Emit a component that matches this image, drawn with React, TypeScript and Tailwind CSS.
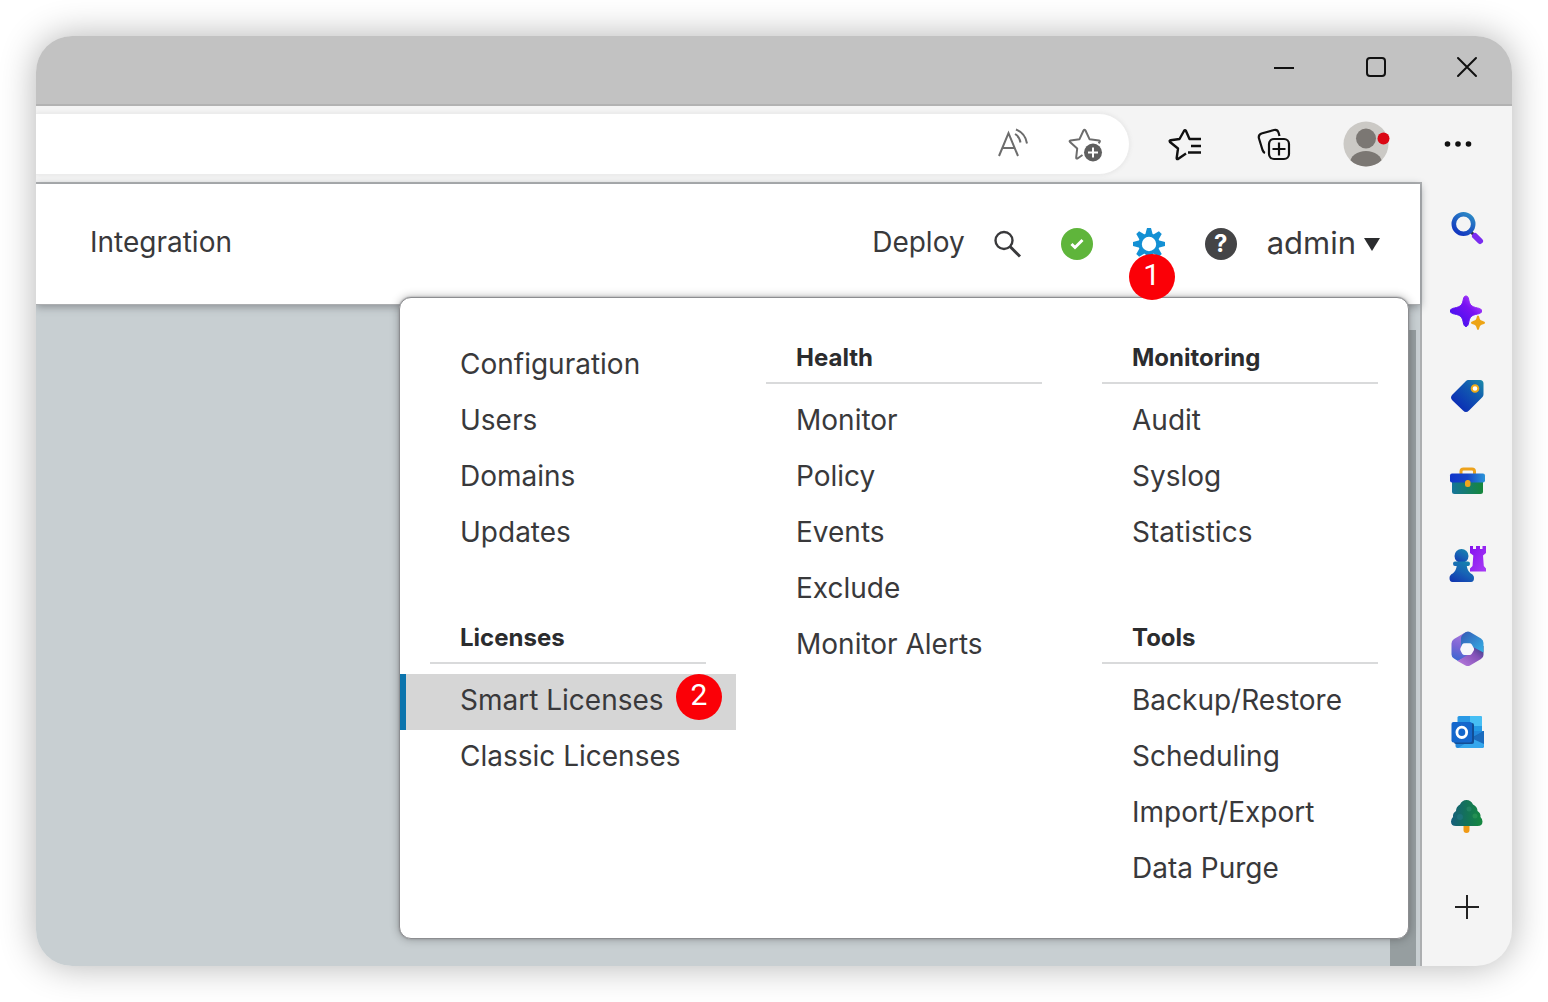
import React from 'react';

type Section = { title?: string; items: string[] };

const columns: Section[][] = [
  [
    { items: ['Configuration', 'Users', 'Domains', 'Updates'] },
    { title: 'Licenses', items: ['Smart Licenses', 'Classic Licenses'] },
  ],
  [{ title: 'Health', items: ['Monitor', 'Policy', 'Events', 'Exclude', 'Monitor Alerts'] }],
  [
    { title: 'Monitoring', items: ['Audit', 'Syslog', 'Statistics'] },
    { title: 'Tools', items: ['Backup/Restore', 'Scheduling', 'Import/Export', 'Data Purge'] },
  ],
];

function Badge({ n }: { n: number }) {
  return (
    <span className="flex size-[46px] items-center justify-center rounded-full bg-[#fb0007] pb-1 font-[Roboto,sans-serif] text-[30px] leading-none font-normal text-white">
      {n}
    </span>
  );
}

function MenuSection({ title, items }: Section) {
  return (
    <section>
      {title && (
        <h2 className="mx-[30px] mb-2.5 h-[46px] border-b-2 border-[#d9dadb] px-[30px] text-[24px] leading-[40px] font-bold text-[#2b2c2e]">
          {title}
        </h2>
      )}
      <ul>
        {items.map((item) => {
          const active = item === 'Smart Licenses';
          return (
            <li key={item} className="relative">
              <a
                href="#"
                className={
                  active
                    ? 'block h-14 border-l-[6px] border-[#0b74ad] bg-[#d6d6d6] pl-[54px] leading-[52px] whitespace-nowrap'
                    : 'block h-14 pl-[60px] leading-[52px] whitespace-nowrap'
                }
              >
                {item}
              </a>
              {active && (
                <span className="absolute top-0 right-3.5">
                  <Badge n={2} />
                </span>
              )}
            </li>
          );
        })}
      </ul>
    </section>
  );
}

const sideIcons: { label: string; art: React.ReactNode }[] = [
  {
    label: 'Search',
    art: (
      <>
        <defs>
          <linearGradient id="ring" x1="0.8" y1="0" x2="0.2" y2="1">
            <stop offset="0" stopColor="#2b86c5" />
            <stop offset="1" stopColor="#1236c0" />
          </linearGradient>
          <linearGradient id="handle" x1="0" y1="0" x2="1" y2="1">
            <stop offset="0" stopColor="#5a1fd0" />
            <stop offset="1" stopColor="#9a3cff" />
          </linearGradient>
        </defs>
        <path d="M22 22l6 6" stroke="#2f3350" strokeWidth="3" />
        <circle cx="14.500" cy="14" r="9.700" fill="none" stroke="url(#ring)" strokeWidth="4.600" />
        <path d="M26 26l5 5" stroke="#7a2cf0" strokeWidth="6" strokeLinecap="round" />
      </>
    ),
  },
  {
    label: 'Discover',
    art: (
      <>
        <defs>
          <linearGradient id="spark" x1="0" y1="1" x2="1" y2="0">
            <stop offset="0.200" stopColor="#4a10f0" />
            <stop offset="0.600" stopColor="#7a12f2" />
            <stop offset="1" stopColor="#c65cff" />
          </linearGradient>
        </defs>
        <path d="M17 2c1.500 0 2.200 1 2.600 3 1.200 6 2.200 7.500 9 9 2.500.500 4 1 4 3s-1.500 2.500-4 3c-6.800 1.400-7.800 3-9 9-.4 2-1.100 3.500-2.600 3.500s-2.200-1.500-2.600-3.500c-1.200-6-2.200-7.600-9-9-2.500-.5-4-1-4-3s1.500-2.500 4-3c6.800-1.500 7.800-3 9-9C14.800 3 15.500 2 17 2z" fill="url(#spark)" stroke="url(#spark)" strokeWidth="1" />
        <path d="M29 21.500c.8 0 1 .8 1.300 1.800.7 2.700 1.200 3.100 3.900 3.900 1 .3 1.800.6 1.800 1.500s-.8 1.200-1.800 1.500c-2.700.8-3.200 1.300-3.900 3.900-.3 1-.5 1.900-1.300 1.900s-1-.9-1.300-1.900c-.7-2.600-1.200-3.100-3.900-3.900-1-.3-1.800-.6-1.800-1.500s.8-1.200 1.800-1.500c2.700-.8 3.200-1.200 3.900-3.900.3-1 .5-1.800 1.300-1.800z" fill="#eda414" />
      </>
    ),
  },
  {
    label: 'Shopping',
    art: (
      <>
        <defs>
          <linearGradient id="tag" x1="1" y1="0" x2="0.200" y2="0.800">
            <stop offset="0" stopColor="#1c8ba8" />
            <stop offset="0.450" stopColor="#1159b0" />
            <stop offset="1" stopColor="#0b2fb5" />
          </linearGradient>
        </defs>
        <path d="M20 2h11c2.200 0 3.500 1.300 3.500 3.500V16c0 1.500-.4 2.500-1.500 3.600L20 32.500c-2 2-4 2-6 0L3.500 22.500c-2-2-2-4 0-6L16.500 3.500C17.600 2.400 18.500 2 20 2z" fill="url(#tag)" />
        <circle cx="26" cy="10.500" r="3.300" fill="#fff" stroke="#edaa18" strokeWidth="2" />
      </>
    ),
  },
  {
    label: 'Tools',
    art: (
      <>
        <defs>
          <linearGradient id="lid">
            <stop offset="0" stopColor="#1134ca" />
            <stop offset="0.500" stopColor="#1646c8" />
            <stop offset="1" stopColor="#2a94d8" />
          </linearGradient>
          <linearGradient id="box">
            <stop offset="0" stopColor="#14749a" />
            <stop offset="1" stopColor="#16873a" />
          </linearGradient>
        </defs>
        <path d="M12 13V9.500q0-2.500 2.500-2.500h8.500q2.500 0 2.500 2.500V13" fill="none" stroke="#eda21c" strokeWidth="3" />
        <path d="M3 17h31v12.500q0 2.500-2.500 2.500h-26Q3 32 3 29.500z" fill="url(#box)" />
        <rect x="1" y="11.500" width="35" height="9" rx="2" fill="url(#lid)" />
        <rect x="16" y="18" width="5.500" height="7" rx="2.500" fill="#efa51d" />
      </>
    ),
  },
  {
    label: 'Games',
    art: (
      <>
        <defs>
          <linearGradient id="pawn" x1="0.800" y1="0" x2="0.200" y2="1">
            <stop offset="0" stopColor="#1585ad" />
            <stop offset="0.500" stopColor="#1763b5" />
            <stop offset="1" stopColor="#1238b0" />
          </linearGradient>
          <linearGradient id="rook" x1="0" y1="0" x2="1" y2="1">
            <stop offset="0" stopColor="#8410ef" />
            <stop offset="1" stopColor="#a93cf5" />
          </linearGradient>
        </defs>
        <path d="M21 0h3v3h3V0h4v3h2.500V0H37v7l-3 2.500.8 10.500 2.200 2.500v3H21v-3l2.500-2.500.8-10.500L21 7z" fill="url(#rook)" />
        <circle cx="12.500" cy="10" r="7" fill="url(#pawn)" />
        <path d="M6 15.500h13q2 0 2 2.300t-2 2.200h-1.200q.5 4.500 4 7.500 3.200 1.500 3.200 4.500 0 4-3 4H3.500q-3 0-3-4 0-3 3.200-4.500 3.500-3 4-7.500H6q-2 0-2-2.200t2-2.300z" fill="url(#pawn)" />
      </>
    ),
  },
  {
    label: 'Microsoft 365',
    art: (
      <>
        <defs>
          <linearGradient id="m1" x1="0.500" y1="0" x2="0.300" y2="1">
            <stop offset="0" stopColor="#a878dc" />
            <stop offset="0.500" stopColor="#7a66d6" />
            <stop offset="1" stopColor="#3868d0" />
          </linearGradient>
          <linearGradient id="m2" x1="0" y1="0" x2="1" y2="1">
            <stop offset="0" stopColor="#3558b4" />
            <stop offset="1" stopColor="#34b2e6" />
          </linearGradient>
          <linearGradient id="m3" x1="1" y1="0" x2="0" y2="1">
            <stop offset="0" stopColor="#283b78" />
            <stop offset="0.400" stopColor="#8452b8" />
            <stop offset="1" stopColor="#bb7cdf" />
          </linearGradient>
        </defs>
        <path d="M17 2L5 9Q2.500 10.500 2.500 13.500v11Q2.500 27 5 28.500l4 2.500 10-5-2-20z" fill="url(#m1)" />
        <path d="M34.500 16v9q0 2.500-2.500 4l-11 6.500q-2 1-4.500 0L8.500 31l10-6 5-10z" fill="url(#m3)" />
        <path d="M17 2q2-1 4 0l11 6.500q2.500 1.500 2.500 4.500v9.500L24 17l-6.500-3.500L12 18V8q0-3 5-6z" fill="url(#m2)" />
        <path d="M15.500 13.300h5q1.500 0 2.300 1.300l2 3.400q.6 1.200 0 2.400l-2 3.300q-.8 1.300-2.300 1.300h-5q-1.500 0-2.300-1.300l-1.700-3.300q-.6-1.200 0-2.400l1.700-3.400q.8-1.300 2.300-1.300z" fill="#f7f7fb" />
      </>
    ),
  },
  {
    label: 'Outlook',
    art: (
      <>
        <rect x="8.500" y="2" width="24.500" height="20" rx="1.500" fill="#2999e5" />
        <path d="M21 2h10.500q1.500 0 1.500 1.500V12H21z" fill="#46bff4" />
        <path d="M21 12h12v6H21z" fill="#249be5" />
        <path d="M6.500 17H33l2 0V32q0 2-2 2H8.500q-2 0-2-2z" fill="#2188dc" />
        <path d="M35 17L20 25l15 8z" fill="#1767b5" />
        <path d="M9 34l26-16v14q0 2-2 2z" fill="#35a7ed" />
        <path d="M23 24.500L35 17v13z" fill="#1b6bbd" />
        <rect x="5" y="9" width="20" height="21" rx="2" fill="#124e95" />
        <rect x="2.500" y="8" width="20.500" height="20.500" rx="2" fill="#1467cc" />
        <ellipse cx="12.800" cy="18.300" rx="4.900" ry="5.200" fill="none" stroke="#fff" strokeWidth="2.800" />
      </>
    ),
  },
  {
    label: 'Tree',
    art: (
      <>
        <defs>
          <linearGradient id="tree">
            <stop offset="0" stopColor="#155e7c" />
            <stop offset="0.500" stopColor="#147358" />
            <stop offset="1" stopColor="#15893f" />
          </linearGradient>
        </defs>
        <path d="M14.500 26h6v6q0 3-3 3t-3-3z" fill="#f09a14" />
        <path d="M17.500 2q4.500 0 6.500 4.500 4.500 2 4.500 6.500 3.500 2 3 6 2 2 2 4.500 0 4.500-5 4.500H7q-5 0-5-4.500 0-2.500 2-4.500-.5-4 3-6 0-4.500 4-6.500Q13 2 17.500 2z" fill="url(#tree)" />
        <circle cx="20" cy="11" r="2.500" fill="#2b8b6a" opacity="0.600" />
        <circle cx="26" cy="18" r="2.500" fill="#35a05c" opacity="0.500" />
        <circle cx="11" cy="19" r="3" fill="#247a8c" opacity="0.500" />
      </>
    ),
  },
];

const iconButton = 'flex items-center justify-center';

function TitleBar() {
  return (
    <div className="flex h-[70px] shrink-0 justify-end border-b-2 border-[#b2b2b2] bg-[#c2c2c2] pb-1.5">
      <button aria-label="Minimize" className={`${iconButton} w-[92px]`}>
        <svg width="22" height="22" stroke="#111" strokeWidth="2"><path d="M1 12h20" /></svg>
      </button>
      <button aria-label="Maximize" className={`${iconButton} w-[92px]`}>
        <svg width="22" height="22" fill="none" stroke="#111" strokeWidth="2"><rect x="2" y="2" width="18" height="18" rx="3" /></svg>
      </button>
      <button aria-label="Close" className={`${iconButton} w-[90px]`}>
        <svg width="22" height="22" stroke="#111" strokeWidth="2" strokeLinecap="round"><path d="M2 2l18 18M20 2L2 20" /></svg>
      </button>
    </div>
  );
}

function Toolbar() {
  return (
    <div className="flex h-[76px] shrink-0 items-center pr-2">
      <div className="mr-2.5 flex h-[62px] min-w-0 flex-1 items-center rounded-r-full border-y border-r border-[#ececec] bg-white pr-2 shadow-[0_0_4px_#e4e4e4]">
        <input aria-label="Address" className="h-full min-w-0 flex-1 bg-transparent px-4 outline-none" />
        <button aria-label="Read aloud" className={`${iconButton} w-[72px]`}>
          <svg width="34" height="34" fill="none" stroke="#6d6d6d" strokeWidth="2">
            <path d="M3 29L12.500 6 22 29M6.500 21h12" />
            <path d="M19 7q4.500 2.500 5.500 8.500M20 2.500q9.500 4 11 14" />
          </svg>
        </button>
        <button aria-label="Add to favorites" className={`${iconButton} w-[72px]`}>
          <svg width="36" height="36" fill="none" stroke="#6d6d6d" strokeWidth="2" strokeLinejoin="round">
            <path d="M15.500 29l-5 3.500q-1.500.5-1.300-1L10.200 22.500 3 16q-1-1.300.5-1.600l9-1.200L16.500 4.500q1-1.600 2 0l4 8.700 9.500 1.200q1.500.3.500 1.800l-1 1" />
            <circle cx="26" cy="26.500" r="9" fill="#5f5f5f" stroke="none" />
            <path d="M26 21.500v10M21 26.500h10" stroke="#fff" />
          </svg>
        </button>
      </div>
      <button aria-label="Favorites" className={`${iconButton} w-[88px]`}>
        <svg width="36" height="36" fill="none" stroke="#111" strokeWidth="2.400" strokeLinejoin="round">
          <path d="M20 27.500l-8 5.500q-1.500.5-1.300-1L12 22.500 4 16q-1-1.500.7-1.800L13.500 13 18 5q1-1.600 2 0l3.500 8H35M25 20h10M22 26.500h13" />
        </svg>
      </button>
      <button aria-label="Collections" className={`${iconButton} w-[92px]`}>
        <svg width="36" height="36" fill="none" stroke="#111" strokeWidth="2.200">
          <path d="M9 27q-1.500-.5-2.500-3L3 12.500Q2 9 5.500 7.500L18 4q3.500-.8 4.500 2.500L23.500 10" />
          <rect x="13" y="13" width="20" height="20" rx="5" />
          <path d="M23 16.500v13M16.500 23h13" />
        </svg>
      </button>
      <button aria-label="Profile" className={`${iconButton} w-[92px]`}>
        <svg width="48" height="46">
          <clipPath id="face"><circle cx="24" cy="23" r="22.500" /></clipPath>
          <circle cx="24" cy="23" r="22.500" fill="#cbc9c5" />
          <g clipPath="url(#face)" fill="#7b7773">
            <circle cx="24" cy="17.500" r="10" />
            <ellipse cx="24" cy="42" rx="16" ry="12" />
          </g>
          <circle cx="41.500" cy="17.500" r="6" fill="#db0714" />
        </svg>
      </button>
      <button aria-label="Settings and more" className={`${iconButton} w-[92px]`}>
        <svg width="30" height="8" fill="#111">
          <circle cx="4.500" cy="4" r="2.800" /><circle cx="15" cy="4" r="2.800" /><circle cx="25.500" cy="4" r="2.800" />
        </svg>
      </button>
    </div>
  );
}

function AppHeader() {
  return (
    <header className="flex h-[121px] items-center border-b border-[#acaeb0] bg-white pr-10 pl-[54px] shadow-[0_2px_8px_#8a8f93]">
      <a href="#" className="pb-1">Integration</a>
      <div className="ml-auto flex items-center">
        <a href="#" className="mr-1 pb-1">Deploy</a>
        <button aria-label="Search" className={`${iconButton} w-[72px] pl-1`}>
          <svg width="28" height="28" fill="none" stroke="#39393b" strokeWidth="2.400">
            <circle cx="11" cy="10.500" r="8.500" /><path d="M17 16.500L27 26.500" strokeWidth="3" />
          </svg>
        </button>
        <button aria-label="Notifications" className={`${iconButton} w-[72px]`}>
          <svg width="32" height="32">
            <circle cx="16" cy="16" r="16" fill="#5fb53b" />
            <path d="M10.500 16l3.500 3.500 7.500-7.500" fill="none" stroke="#fff" strokeWidth="3" />
          </svg>
        </button>
        <div className="relative">
          <button aria-label="System" className={`${iconButton} w-[72px]`}>
            <svg width="32" height="32" fill="#1390d4">
              {[0, 45, 90, 135, 180, 225, 270, 315].map((a) => (
                <path key={a} d="M12 7.500L14 0h4L20 7.500z" transform={`rotate(${a} 16 16)`} />
              ))}
              <circle cx="16" cy="16" r="8.900" fill="none" stroke="#1390d4" strokeWidth="3.400" />
            </svg>
          </button>
          <span className="absolute top-[26px] left-4 z-20"><Badge n={1} /></span>
        </div>
        <button aria-label="Help" className={`${iconButton} w-[72px]`}>
          <span className="flex size-8 items-center justify-center rounded-full bg-[#444446] text-[24px] leading-none font-bold text-white">?</span>
        </button>
        <button className="ml-2.5 flex items-center gap-2">
          <span className="pb-0.5 text-[31px]">admin</span>
          <svg width="16" height="14" fill="#2b2c2e"><path d="M0 1h16L8 14z" /></svg>
        </button>
      </div>
    </header>
  );
}

export default function App() {
  return (
    <div className="flex min-h-screen flex-col bg-white p-9 font-[Inter,sans-serif] text-[28px] text-[#39393b]">
      <div className="flex flex-1 flex-col overflow-hidden rounded-[36px] bg-[#f4f4f4] shadow-[0_0_36px_rgba(0,0,0,0.3)]">
        <TitleBar />
        <Toolbar />
        <div className="flex flex-1">
          <main className="relative flex min-w-0 flex-1 flex-col border-t-2 border-r-2 border-[#acaeb0] bg-[#c8cfd2]">
            <AppHeader />
            <div className="flex flex-1 justify-end pt-[25px] pr-1">
              <div className="w-[26px] bg-[#969ea0]" />
            </div>
            <nav
              aria-label="System menu"
              className="absolute top-[113px] right-[11px] z-10 grid grid-cols-3 rounded-[12px] border border-[#8c8d90] bg-white py-10 shadow-[0_0_2px_#8c8d90,0_0_10px_rgba(0,0,0,0.3)]"
            >
              {columns.map((col, i) => (
                <div key={i} className="flex w-[336px] flex-col gap-14">
                  {col.map((s, j) => <MenuSection key={j} {...s} />)}
                </div>
              ))}
            </nav>
          </main>
          <aside className="flex w-[90px] flex-col items-center pt-1">
            {sideIcons.map(({ label, art }) => (
              <button key={label} aria-label={label} className={`${iconButton} h-[84px] w-full`}>
                <svg width="37" height="37" viewBox="0 0 37 37">{art}</svg>
              </button>
            ))}
            <button aria-label="Customize" className={`${iconButton} h-[98px] w-full`}>
              <svg width="26" height="26" stroke="#222" strokeWidth="2"><path d="M13 1v24M1 13h24" /></svg>
            </button>
          </aside>
        </div>
      </div>
    </div>
  );
}
